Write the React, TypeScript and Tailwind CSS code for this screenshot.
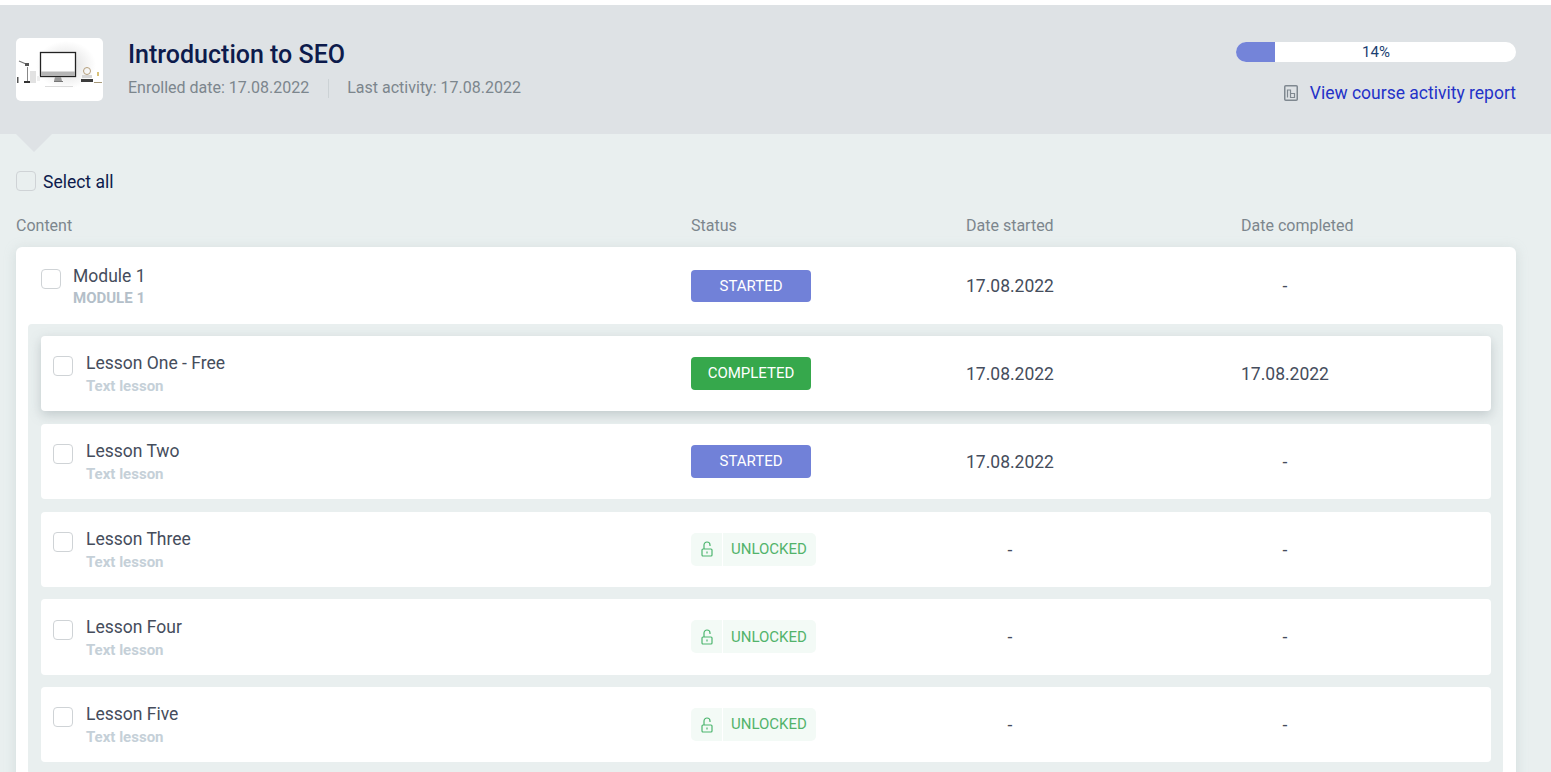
const lessons = [
  { name: "Lesson One - Free", status: "completed", started: "17.08.2022", completed: "17.08.2022" },
  { name: "Lesson Two", status: "started", started: "17.08.2022", completed: "-" },
  { name: "Lesson Three", status: "unlocked", started: "-", completed: "-" },
  { name: "Lesson Four", status: "unlocked", started: "-", completed: "-" },
  { name: "Lesson Five", status: "unlocked", started: "-", completed: "-" },
]

function Checkbox({ className = "" }: { className?: string }) {
  return <span className={`block w-5 h-5 shrink-0 rounded-[4px] border border-[#cfd3d6] ${className}`} />
}

function OpenLock() {
  return (
    <svg viewBox="0 0 12 16" className="w-3 h-4 text-[#4db56f]" fill="none" stroke="currentColor" strokeWidth="1.2">
      <rect x="1" y="8" width="10" height="7" rx="1" />
      <path d="M3 8V4a3 3 0 0 1 6 0v1" />
      <path d="M6 10.500v2" />
    </svg>
  )
}

function Status({ status, className = "h-[33px]" }: { status: string; className?: string }) {
  if (status === "unlocked") {
    return (
      <div className={`flex w-[125px] text-[15px] text-[#52b36b] ${className}`}>
        <span className="w-[31px] flex items-center justify-center bg-[#f3faf6] rounded-l-[5px]">
          <OpenLock />
        </span>
        <span className="flex-1 ml-px pl-[8px] flex items-center bg-[#f3faf6] rounded-r-[5px]">UNLOCKED</span>
      </div>
    )
  }
  const color = status === "completed" ? "bg-[#36a84c]" : "bg-[#7181d8]"
  return (
    <div className={`w-[120px] rounded-[4px] flex items-center justify-center text-[15px] text-white ${color} ${className}`}>
      {status.toUpperCase()}
    </div>
  )
}

function DateCell({ value }: { value: string }) {
  return <div className="w-[88px] mt-px text-center text-[17.500px] whitespace-nowrap text-[#454d5c]">{value}</div>
}

function Thumb() {
  return (
    <div className="w-[87px] h-[63px] rounded-[5px] bg-white overflow-hidden shrink-0">
      <svg viewBox="0 0 87 63" className="w-full h-full">
        <defs>
          <radialGradient id="glow">
            <stop offset="0%" stopColor="#dcdcdc" />
            <stop offset="100%" stopColor="#ffffff" />
          </radialGradient>
        </defs>
        <ellipse cx="50" cy="27" rx="30" ry="24" fill="url(#glow)" />
        <rect x="24.500" y="14.500" width="35" height="24" fill="#fff" stroke="#222" strokeWidth="1.300" />
        <rect x="25" y="33.500" width="34" height="4.500" fill="#b5b5b5" />
        <path d="M39 39h6l1 4h-8z" fill="#999" />
        <rect x="38" y="43" width="9" height="1" fill="#777" />
        <rect x="29" y="48" width="28" height="1" fill="#dcdcdc" />
        <path d="M3 23l7 3" stroke="#777" strokeWidth="1.200" fill="none" />
        <rect x="9" y="25" width="4" height="3" fill="#555" />
        <rect x="11" y="29" width="1" height="15" fill="#888" />
        <rect x="8" y="43" width="9" height="2" fill="#333" />
        <rect x="14" y="33" width="6" height="12" fill="#e2e2e2" />
        <rect x="1" y="39" width="1.500" height="6" fill="#555" />
        <rect x="21" y="38" width="3" height="5" fill="#eee" />
        <circle cx="71" cy="33" r="3.500" fill="none" stroke="#b59f7c" />
        <rect x="66" y="37" width="10" height="3" fill="#d5d5d5" />
        <rect x="65" y="41" width="12" height="3" fill="#3d3d3d" />
        <rect x="81" y="34" width="2" height="4" fill="#d9c27a" />
        <rect x="78" y="44" width="8" height="1" fill="#a89a7a" />
      </svg>
    </div>
  )
}

export default function App() {
  return (
    <div className="h-screen overflow-hidden bg-[#e9efef] font-['Roboto',sans-serif] border-t-[5px] border-white">
      {/* Header */}
      <header className="relative h-[129px] bg-[#dee2e5] pl-4 pr-[35px] pt-[33px] flex justify-between items-start">
        <div className="flex gap-[25px]">
          <Thumb />
          <div className="pt-px">
            <h1 className="text-[25px] leading-[32px] font-medium text-[#0d1b4c]">Introduction to SEO</h1>
            <div className="flex items-center mt-[5px] text-[16px] leading-[24px] text-[#7c868d]">
              <span>Enrolled date: 17.08.2022</span>
              <span className="w-px h-[19px] bg-[#ccd2d5] ml-[19px] mr-[18px]" />
              <span>Last activity: 17.08.2022</span>
            </div>
          </div>
        </div>
        <div className="flex flex-col items-end mt-[4px]">
          <div className="relative w-[280px] h-5 rounded-full bg-white overflow-hidden text-center text-[15px] leading-5 text-[#1b3f72]">
            <div className="absolute left-0 top-0 h-full w-[39px] bg-[#7484d9]" />
            <span className="relative">14%</span>
          </div>
          <div className="flex items-center gap-[12px] mt-[19px]">
            <svg viewBox="0 0 14 16" className="w-[14px] h-4" fill="none" stroke="#7f8890" strokeWidth="1.500">
              <rect x="0.750" y="0.750" width="12.500" height="14.500" rx="1" />
              <path d="M3.500 12.500V5h3v7.500M6.500 12.500V8.500h4v4z" strokeWidth="1.200" />
            </svg>
            <span className="text-[17.500px] leading-6 text-[#2432c8]">View course activity report</span>
          </div>
        </div>
        <div className="absolute left-[16px] top-full w-0 h-0 border-l-[18px] border-r-[18px] border-t-[18px] border-l-transparent border-r-transparent border-t-[#dee2e5]" />
      </header>

      <div className="pl-4 pr-[35px]">
        <label className="flex items-start gap-[7px] mt-[37px] text-[17.500px] leading-5 text-[#0d1b4c]">
          <Checkbox className="border-[#c4cacc]" />
          <span className="mt-px">Select all</span>
        </label>

        <div className="grid grid-cols-[675px_275px_275px_1fr] mt-[24px] text-[16px] leading-5 text-[#7c868d]">
          <span>Content</span>
          <span>Status</span>
          <span>Date started</span>
          <span>Date completed</span>
        </div>

        <div className="mt-[11px] bg-white rounded-[6px] shadow-[0_2px_12px_rgba(170,185,185,0.35)] pl-3 pr-[13px] pb-3">
          {/* Module row */}
          <div className="h-[77px] pt-px pl-[13px] grid grid-cols-[650px_275px_275px_1fr] items-center">
            <div className="flex gap-3 mt-[2px]">
              <Checkbox className="mt-[4px]" />
              <div>
                <div className="text-[17.500px] leading-[22px] text-[#454d5c]">Module 1</div>
                <div className="text-[15px] leading-[22px] font-bold text-[#b4bfc9]">MODULE 1</div>
              </div>
            </div>
            <Status status="started" className="h-[32.750px]" />
            <DateCell value="17.08.2022" />
            <DateCell value="-" />
          </div>

          {/* Lessons */}
          <div className="bg-[#e9efef] rounded-[4px] pt-3 pb-3 pr-3 pl-[13px] flex flex-col gap-[12.500px]">
            {lessons.map((lesson, i) => (
              <div
                key={lesson.name}
                className={`h-[75.250px] bg-white rounded-[4px] pl-3 grid grid-cols-[638px_275px_275px_1fr] items-center ${
                  i === 0 ? "shadow-[0_4px_12px_rgba(120,135,140,0.35)]" : ""
                }`}
              >
                <div className="flex gap-[13px] mt-[1.500px]">
                  <Checkbox className="mt-[5px]" />
                  <div>
                    <div className="text-[17.500px] leading-[24px] text-[#454d5c]">{lesson.name}</div>
                    <div className="text-[15px] leading-[22px] font-bold text-[#c5d0d8]">Text lesson</div>
                  </div>
                </div>
                <Status status={lesson.status} />
                <DateCell value={lesson.started} />
                <DateCell value={lesson.completed} />
              </div>
            ))}
          </div>
        </div>
      </div>
    </div>
  )
}
